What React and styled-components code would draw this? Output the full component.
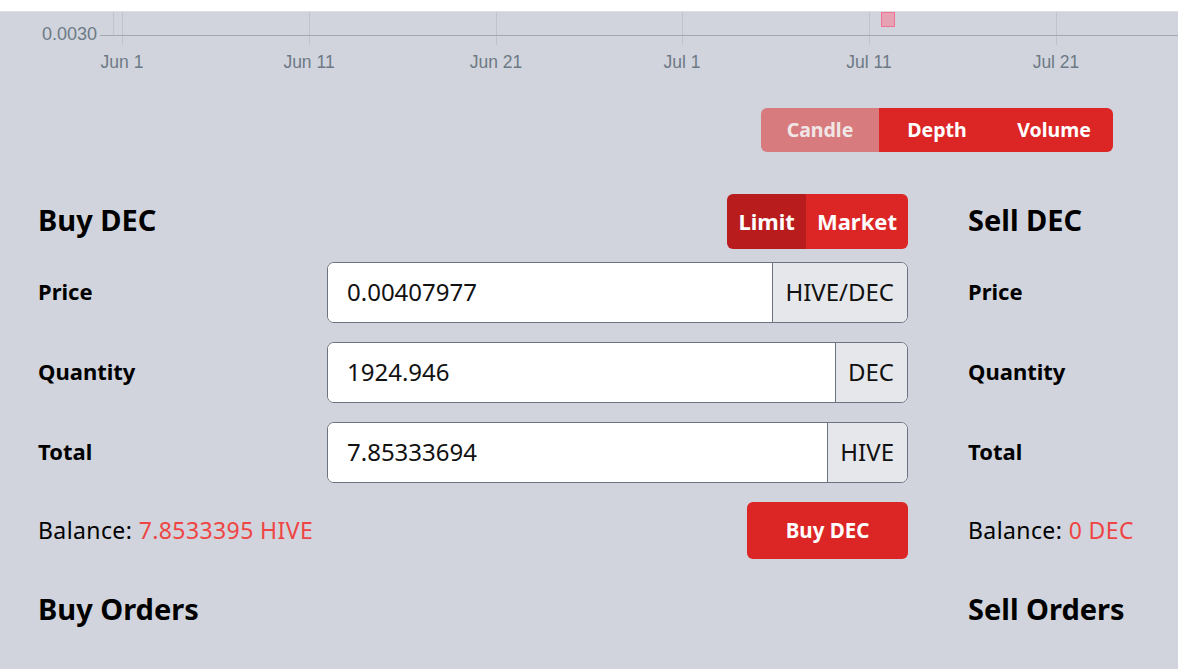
import React from "react";
import styled, { createGlobalStyle } from "styled-components";

const GlobalStyle = createGlobalStyle`
  html, body {
    margin: 0;
    padding: 0;
    background: #d1d4dc;
    font-family: "Noto Sans", "Open Sans", sans-serif;
    color: #000;
    overflow: hidden;
  }
  * {
    box-sizing: border-box;
  }
`;

const Page = styled.div`
  width: 1178px;
  height: 669px;
  overflow: hidden;
`;

const TopStrip = styled.div`
  height: 12px;
  background: #ffffff;
  border-bottom: 1px solid #dcdde0;
`;

const ChartTabs = styled.div`
  display: flex;
  justify-content: flex-end;
  padding-right: 65px;
  margin-top: 21px;
`;

const TabGroup = styled.div`
  display: flex;
  border-radius: 6px;
  overflow: hidden;
`;

const Tab = styled.button`
  border: none;
  height: 44px;
  width: ${(p) => p.$w}px;
  padding: 0 0 2px;
  font-family: inherit;
  font-size: 19.5px;
  font-weight: 700;
  color: ${(p) => (p.$active ? "#f1e6e6" : "#ffffff")};
  background: ${(p) => (p.$active ? "#d77b7e" : "#dc2626")};
  cursor: pointer;
`;

const Trade = styled.div`
  display: grid;
  grid-template-columns: 870px 870px;
  column-gap: 60px;
  padding-left: 38px;
  margin-top: 42px;
`;

const Panel = styled.div`
  display: flex;
  flex-direction: column;
`;

const HeadRow = styled.div`
  display: flex;
  justify-content: space-between;
  align-items: center;
  height: 55px;
  margin-bottom: 13px;
`;

const Heading = styled.h2`
  margin: 0;
  padding-bottom: 4px;
  font-size: 29px;
  line-height: 37px;
  font-weight: 700;
`;

const ModeToggle = styled.div`
  display: flex;
  height: 55px;
  border-radius: 6px;
  overflow: hidden;
`;

const ModeButton = styled.button`
  border: none;
  padding: 0 ${(p) => p.$pad}px 2px;
  font-family: inherit;
  font-size: 22px;
  font-weight: 700;
  color: #fff;
  background: ${(p) => (p.$active ? "#b91c1c" : "#dc2626")};
`;

const FormRow = styled.div`
  display: grid;
  grid-template-columns: 289px 1fr;
  align-items: center;
  height: 61px;
  margin-bottom: 19px;
`;

const Label = styled.label`
  padding-bottom: 4px;
  font-size: 22px;
  font-weight: 700;
`;

const InputGroup = styled.div`
  display: flex;
  height: 61px;
  border: 1px solid #6b7280;
  border-radius: 7px;
  overflow: hidden;
  background: #fff;
`;

const Input = styled.input`
  flex: 1;
  min-width: 0;
  border: none;
  outline: none;
  padding: 0 19px 2px;
  font-family: inherit;
  font-size: 24px;
  color: #111;
  background: #fff;
`;

const Addon = styled.span`
  display: flex;
  align-items: center;
  padding: 0 13px 2px 12px;
  border-left: 1px solid #6b7280;
  background: #e5e7eb;
  font-size: 24px;
  color: #111;
`;

const BalanceRow = styled.div`
  display: flex;
  justify-content: space-between;
  align-items: center;
  height: 57px;
  margin-bottom: 31px;
`;

const Balance = styled.div`
  padding-bottom: 2px;
  font-size: 23px;
  letter-spacing: 0.4px;
  span {
    color: #ef4444;
  }
`;

const SubmitButton = styled.button`
  width: 161px;
  height: 57px;
  padding: 0 0 2px;
  border: none;
  border-radius: 6px;
  background: #dc2626;
  color: #fff;
  font-family: inherit;
  font-size: 20.5px;
  font-weight: 700;
`;

const gridX = [122, 309, 496, 682, 869, 1056];
const dates = ["Jun 1", "Jun 11", "Jun 21", "Jul 1", "Jul 11", "Jul 21"];

function Chart() {
  return (
    <svg width="1178" height="75" style={{ display: "block" }}>
      {gridX.map((x) => (
        <line key={x} x1={x + 0.5} y1="0" x2={x + 0.5} y2="33" stroke="#bfc3ca" strokeWidth="1" />
      ))}
      <line x1="113.5" y1="0" x2="113.5" y2="23" stroke="#bfc3ca" />
      <line x1="100" y1="23.5" x2="1178" y2="23.5" stroke="#a3a7ae" />
      <rect x="881.5" y="0.5" width="13" height="14" fill="#e6a1b2" stroke="#f27395" />
      <text x="97" y="28" textAnchor="end" fontFamily="Liberation Sans, Arial, sans-serif" fontSize="18" fill="#6d7a86">
        0.0030
      </text>
      {gridX.map((x, i) => (
        <text
          key={dates[i]}
          x={x}
          y="56"
          textAnchor="middle"
          fontFamily="Liberation Sans, Arial, sans-serif"
          fontSize="17.5"
          fill="#6d7a86"
        >
          {dates[i]}
        </text>
      ))}
    </svg>
  );
}

function Field({ label, value, unit }) {
  return (
    <FormRow>
      <Label>{label}</Label>
      {value !== undefined && (
        <InputGroup>
          <Input defaultValue={value} />
          <Addon>{unit}</Addon>
        </InputGroup>
      )}
    </FormRow>
  );
}

export default function App() {
  return (
    <Page>
      <GlobalStyle />
      <TopStrip />
      <Chart />
      <ChartTabs>
        <TabGroup>
          <Tab $w={118} $active>
            Candle
          </Tab>
          <Tab $w={116}>Depth</Tab>
          <Tab $w={118}>Volume</Tab>
        </TabGroup>
      </ChartTabs>
      <Trade>
        <Panel>
          <HeadRow>
            <Heading>Buy DEC</Heading>
            <ModeToggle>
              <ModeButton $pad={11} $active>
                Limit
              </ModeButton>
              <ModeButton $pad={11}>Market</ModeButton>
            </ModeToggle>
          </HeadRow>
          <Field label="Price" value="0.00407977" unit="HIVE/DEC" />
          <Field label="Quantity" value="1924.946" unit="DEC" />
          <Field label="Total" value="7.85333694" unit="HIVE" />
          <BalanceRow>
            <Balance>
              Balance: <span>7.8533395 HIVE</span>
            </Balance>
            <SubmitButton>Buy DEC</SubmitButton>
          </BalanceRow>
          <Heading>Buy Orders</Heading>
        </Panel>
        <Panel>
          <HeadRow>
            <Heading>Sell DEC</Heading>
          </HeadRow>
          <Field label="Price" />
          <Field label="Quantity" />
          <Field label="Total" />
          <BalanceRow>
            <Balance>
              Balance: <span>0 DEC</span>
            </Balance>
          </BalanceRow>
          <Heading>Sell Orders</Heading>
        </Panel>
      </Trade>
    </Page>
  );
}
